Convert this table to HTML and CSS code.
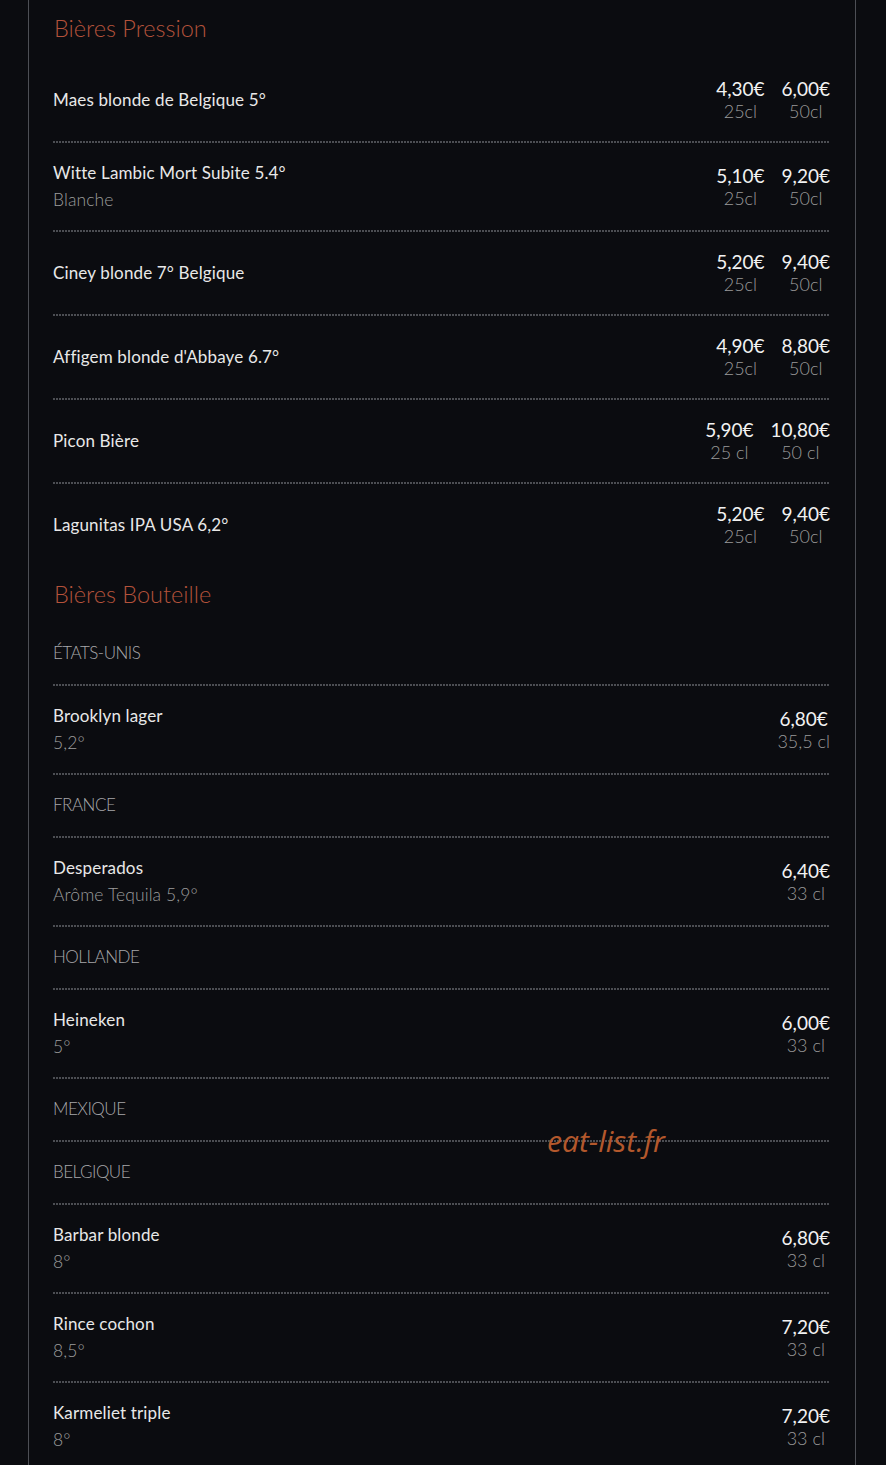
FILE: index.html
```html
<!DOCTYPE html>
<html lang="fr">
<head>
    <meta charset="UTF-8">
    <meta name="viewport" content="width=device-width, initial-scale=1.0">
    <title>Carte des bières</title>
    <link rel="stylesheet" href="styles.css">
</head>
<body>

<div class="menu">
    <h2 class="section-title first">Bières Pression</h2>

    <div class="item">
        <div class="item-name">
            <p class="name">Maes blonde de Belgique 5°</p>
        </div>
        <div class="prices">
            <div class="price"><span class="amount">4,30€</span><span class="size">25cl</span></div>
            <div class="price"><span class="amount">6,00€</span><span class="size">50cl</span></div>
        </div>
    </div>

    <div class="item">
        <div class="item-name">
            <p class="name">Witte Lambic Mort Subite 5.4°</p>
            <p class="desc">Blanche</p>
        </div>
        <div class="prices">
            <div class="price"><span class="amount">5,10€</span><span class="size">25cl</span></div>
            <div class="price"><span class="amount">9,20€</span><span class="size">50cl</span></div>
        </div>
    </div>

    <div class="item">
        <div class="item-name">
            <p class="name">Ciney blonde 7° Belgique</p>
        </div>
        <div class="prices">
            <div class="price"><span class="amount">5,20€</span><span class="size">25cl</span></div>
            <div class="price"><span class="amount">9,40€</span><span class="size">50cl</span></div>
        </div>
    </div>

    <div class="item">
        <div class="item-name">
            <p class="name">Affigem blonde d'Abbaye 6.7°</p>
        </div>
        <div class="prices">
            <div class="price"><span class="amount">4,90€</span><span class="size">25cl</span></div>
            <div class="price"><span class="amount">8,80€</span><span class="size">50cl</span></div>
        </div>
    </div>

    <div class="item">
        <div class="item-name">
            <p class="name">Picon Bière</p>
        </div>
        <div class="prices">
            <div class="price"><span class="amount">5,90€</span><span class="size">25 cl</span></div>
            <div class="price"><span class="amount">10,80€</span><span class="size">50 cl</span></div>
        </div>
    </div>

    <div class="item last">
        <div class="item-name">
            <p class="name">Lagunitas IPA USA 6,2°</p>
        </div>
        <div class="prices">
            <div class="price"><span class="amount">5,20€</span><span class="size">25cl</span></div>
            <div class="price"><span class="amount">9,40€</span><span class="size">50cl</span></div>
        </div>
    </div>

    <h2 class="section-title">Bières Bouteille</h2>

    <div class="country">ÉTATS-UNIS</div>

    <div class="item">
        <div class="item-name">
            <p class="name">Brooklyn lager</p>
            <p class="desc">5,2°</p>
        </div>
        <div class="prices">
            <div class="price"><span class="amount">6,80€</span><span class="size">35,5 cl</span></div>
        </div>
    </div>

    <div class="country">FRANCE</div>

    <div class="item">
        <div class="item-name">
            <p class="name">Desperados</p>
            <p class="desc">Arôme Tequila 5,9°</p>
        </div>
        <div class="prices">
            <div class="price"><span class="amount">6,40€</span><span class="size">33 cl</span></div>
        </div>
    </div>

    <div class="country">HOLLANDE</div>

    <div class="item">
        <div class="item-name">
            <p class="name">Heineken</p>
            <p class="desc">5°</p>
        </div>
        <div class="prices">
            <div class="price"><span class="amount">6,00€</span><span class="size">33 cl</span></div>
        </div>
    </div>

    <div class="country">MEXIQUE</div>

    <div class="country">BELGIQUE</div>

    <div class="item">
        <div class="item-name">
            <p class="name">Barbar blonde</p>
            <p class="desc">8°</p>
        </div>
        <div class="prices">
            <div class="price"><span class="amount">6,80€</span><span class="size">33 cl</span></div>
        </div>
    </div>

    <div class="item">
        <div class="item-name">
            <p class="name">Rince cochon</p>
            <p class="desc">8,5°</p>
        </div>
        <div class="prices">
            <div class="price"><span class="amount">7,20€</span><span class="size">33 cl</span></div>
        </div>
    </div>

    <div class="item last">
        <div class="item-name">
            <p class="name">Karmeliet triple</p>
            <p class="desc">8°</p>
        </div>
        <div class="prices">
            <div class="price"><span class="amount">7,20€</span><span class="size">33 cl</span></div>
        </div>
    </div>

    <div class="watermark">eat-list.fr</div>
</div>

</body>
</html>
```

FILE: styles.css
```css
* {
    box-sizing: border-box;
    margin: 0;
    padding: 0;
}

body {
    font-family: Lato, 'Open Sans', sans-serif;
    background-color: #0b0c10;
    color: #ececec;
    height: 1465px;
    overflow: hidden;
}

.menu {
    position: relative;
    width: 828px;
    min-height: 100%;
    margin-left: 28px;
    padding: 2px 24px 0 24px;
    border-left: 1px solid #4d4f55;
    border-right: 1px solid #4d4f55;
}

.section-title {
    font-weight: 300;
    font-size: 23.5px;
    line-height: 32px;
    color: #b4523b;
    padding: 10px 0 13px 1px;
}

.section-title.first {
    padding-bottom: 15px;
}

/* rows separated by a dotted rule */
.item,
.country {
    background-image: linear-gradient(to right, #4c4e53 2px, transparent 2px);
    background-size: 3px 2px;
    background-repeat: repeat-x;
    background-position: left bottom;
    margin-right: 1px;
}

.item {
    display: flex;
    justify-content: space-between;
    align-items: center;
    padding: 19px 0 21px 0;
}

.item.last {
    background-image: none;
}

.name {
    font-size: 17px;
    line-height: 22px;
    color: #e8e8e8;
    letter-spacing: 0.15px;
}

.desc {
    font-size: 17.5px;
    line-height: 22px;
    margin-top: 5px;
    font-weight: 300;
    color: #9c9c9c;
    letter-spacing: 0.1px;
}

.country {
    font-size: 17px;
    line-height: 22px;
    font-weight: 300;
    color: #a7a7aa;
    letter-spacing: -0.5px;
    padding: 19px 0 22px 0;
}

.prices {
    display: flex;
    gap: 17px;
}

.price {
    display: flex;
    flex-direction: column;
    align-items: center;
}

.amount {
    font-size: 19px;
    line-height: 22px;
    color: #f2f2f2;
}

.size {
    font-size: 18px;
    line-height: 22px;
    font-weight: 300;
    color: #9a9a9a;
}

.watermark {
    position: absolute;
    left: 518px;
    top: 1120px;
    font-family: 'Open Sans', sans-serif;
    font-style: italic;
    font-size: 30px;
    color: #b3582c;
}
```
